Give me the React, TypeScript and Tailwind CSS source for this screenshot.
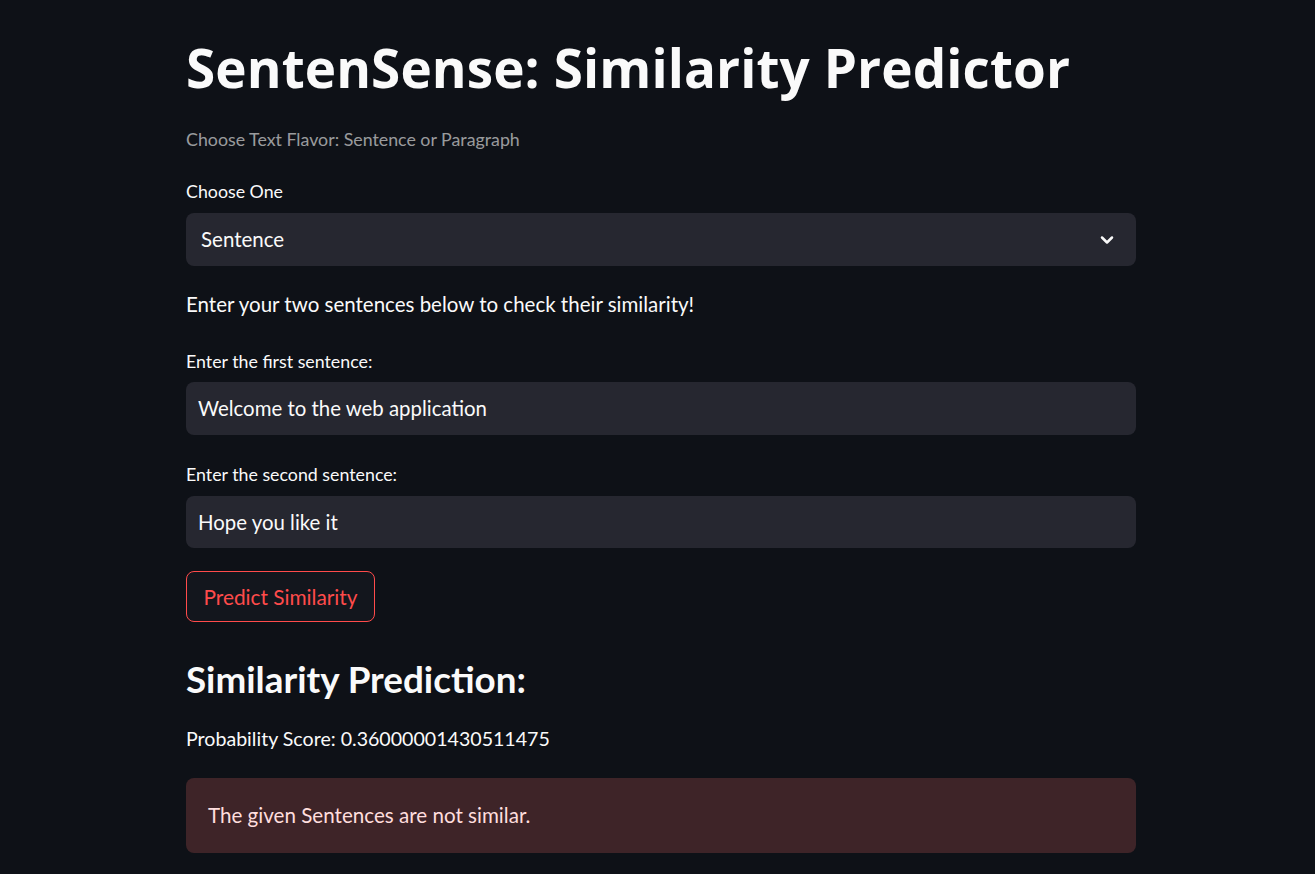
import { ChevronDown } from 'lucide-react'

const font = { fontFamily: 'Lato, "Noto Sans", sans-serif' }

const App = () => {
    return <div className="min-h-screen w-full bg-[#0e1117] text-[#fafafa]" style={font}>
        <div className="ml-[186px] flex w-[950px] flex-col pt-[36px]">
            <h1 className="text-[53px] font-bold leading-[64px] tracking-[0.1px]" style={{ fontFamily: '"Open Sans", Lato, sans-serif' }}>SentenSense: Similarity Predictor</h1>
            <p className="mt-[27px] text-[17.8px] leading-[24px] text-[#fafafa]/60">Choose Text Flavor: Sentence or Paragraph</p>

            <label className="mt-[29px] text-[17.8px] leading-[22px]">Choose One</label>
            <div className="mt-[11px] flex h-[53px] items-center justify-between rounded-lg bg-[#262730] pl-[15px] pr-[19px]">
                <span className="text-[20.5px]">Sentence</span>
                <ChevronDown size={20} strokeWidth={3} />
            </div>

            <p className="mt-[24px] text-[20.5px] leading-[28px]">Enter your two sentences below to check their similarity!</p>

            <label className="mt-[32px] text-[17.8px] leading-[22px]">Enter the first sentence:</label>
            <div className="mt-[10px] flex h-[53px] items-center rounded-lg bg-[#262730] px-3">
                <span className="text-[20.4px]">Welcome to the web application</span>
            </div>

            <label className="mt-[28px] text-[17.8px] leading-[22px]">Enter the second sentence:</label>
            <div className="mt-[11px] flex h-[52px] items-center rounded-lg bg-[#262730] px-3">
                <span className="text-[20.4px]">Hope you like it</span>
            </div>

            <div className="mt-[23px]">
                <button className="h-[51px] w-[189px] rounded-lg border border-[#ff4b4b] bg-[#13161d] text-[20.8px] text-[#ff4b4b]">Predict Similarity</button>
            </div>

            <h2 className="mt-[35px] text-[36.8px] font-bold leading-[44px]">Similarity Prediction:</h2>
            <p className="mt-[24px] text-[19.6px] leading-[28px]">Probability Score: 0.36000001430511475</p>

            <div className="mt-[25px] flex h-[75px] items-center rounded-lg bg-[#3e2428] px-[22px]">
                <span className="text-[20.6px] text-[#ffdede]">The given Sentences are not similar.</span>
            </div>
        </div>
    </div>
}

export default App
